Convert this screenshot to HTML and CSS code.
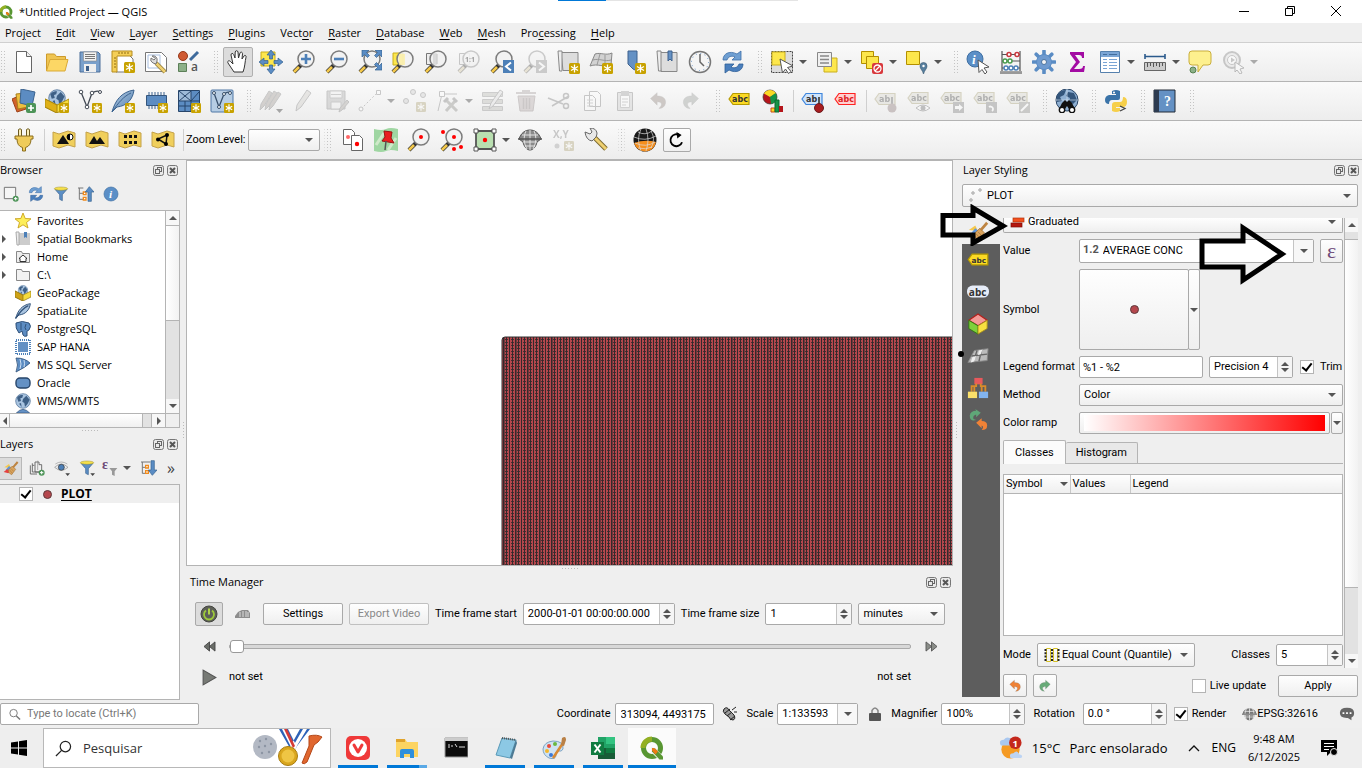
FILE: index.html
```html
<!DOCTYPE html>
<html lang="en">
<head>
<meta charset="utf-8">
<title>*Untitled Project — QGIS</title>
<link rel="stylesheet" href="styles.css">
</head>
<body>
<svg class="defs" aria-hidden="true">
  <defs>
    <linearGradient id="gsky" x1="0" y1="0" x2="1" y2="1"><stop offset="0" stop-color="#b9cfe6"/><stop offset="1" stop-color="#4d7cae"/></linearGradient>
    <symbol id="star" viewBox="0 0 11 11"><rect width="11" height="11" rx="1.500" fill="#c8a200"/><path d="M5.500 1.500v8M2 3.500l7 4M9 3.500l-7 4" stroke="#fff" stroke-width="1.300"/></symbol>
    <symbol id="mag" viewBox="0 0 24 24"><path d="M2 22l7-7" stroke="#333" stroke-width="4"/><path d="M2 22l5-5" stroke="#f4c84a" stroke-width="2.600"/><circle cx="14" cy="9" r="8" fill="#f1f1f1" fill-opacity=".85" stroke="#7c7c7c" stroke-width="1.500"/></symbol>
    <symbol id="tag" viewBox="0 0 22 14"><path d="M1 7l4-5.500h16v11H5z" fill="currentColor" stroke="var(--line,#b59a00)" stroke-width="1.200"/></symbol>
    <symbol id="earth" viewBox="0 0 24 24"><circle cx="12" cy="12" r="11" fill="#a9c4e0" stroke="#476a91"/><path d="M3 7c3-4 6-4 9-4l-1 4-3 1 1 4-4 1zM12 9l5-5 5 6-3 6-4 5-1-6-3-2zM6 16l3-1 1 6z" fill="#3e6086"/></symbol>
    <symbol id="refresh" viewBox="0 0 24 24"><path d="M2 10C2 4 8 0 16 4l4-3v9h-9l3-3C10 5 7 7 6 10z" fill="#6f9fd2" stroke="#3d6fa8" stroke-width=".8"/><path d="M22 14c0 6-6 10-14 6l-4 3v-9h9l-3 3c4 2 7 0 8-3z" fill="#4a7fbd" stroke="#2f5f98" stroke-width=".8"/></symbol>
    <symbol id="float" viewBox="0 0 11 11"><rect x=".5" y=".5" width="10" height="10" rx="2" fill="#e9e9e9" stroke="#777"/><rect x="4.500" y="2.500" width="4" height="4" fill="none" stroke="#666"/><rect x="2.500" y="4.500" width="4" height="4" fill="#e9e9e9" stroke="#666"/></symbol>
    <symbol id="close" viewBox="0 0 11 11"><rect x=".5" y=".5" width="10" height="10" rx="2" fill="#e9e9e9" stroke="#777"/><path d="M3 3l5 5M8 3l-5 5" stroke="#555" stroke-width="2"/></symbol>
    <symbol id="ground" viewBox="0 0 24 24"><path d="M1 4l6 2 9-3 7 2v14l-7-2-9 3-6-2z" fill="#f0cf5c" stroke="#c4a24a"/></symbol>
    <symbol id="undo" viewBox="0 0 24 24"><path d="M3 9l8-7v4c7 0 11 3 10 9-1 4-4 6-8 6 5-4 4-8-2-8v4z" fill="currentColor" stroke="#666" stroke-opacity=".4"/></symbol>
    <symbol id="funnel" viewBox="0 0 24 24"><path d="M3 5h18l-7 8v9l-4-2v-7z" fill="#5c8fc6" stroke="#38618f"/><ellipse cx="12" cy="4" rx="10" ry="2.500" fill="#f6e04a" stroke="#9c8b24" stroke-width=".7"/></symbol>
    <symbol id="brush" viewBox="0 0 24 24"><path d="M2 11l7-5 3 6z" fill="#f5c84c"/><path d="M4 15l5-6 5 4-3 3z" fill="#5b94dc"/><path d="M1 18l5-4 5 2-3 4z" fill="#e54040"/><path d="M8 15l6-6 5 5-6 8c-3-1-5-4-5-7z" fill="#d9a35d" stroke="#9d6c30" stroke-width=".8"/><path d="M15 11l7-8" stroke="#bd8340" stroke-width="3"/><path d="M10 15l4 5M12 13l4 4" stroke="#9d6c30" stroke-width=".7"/></symbol>
    <symbol id="qlogo" viewBox="0 0 24 24"><circle cx="12" cy="12" r="8.500" fill="none" stroke="#589632" stroke-width="5"/><path d="M3 12a9 9 0 0 1 9-9" fill="none" stroke="#93b023" stroke-width="5"/><path d="M11 11l4 1 8 8v4h-4l-8-8z" fill="#f0f0f0"/><path d="M12 12l3 .5 8 8v3h-3.500l-7.500-8z" fill="#589632"/><path d="M12 12l3 .5 3 3-2.500 3-3.500-4z" fill="#ee7913"/></symbol>
    <symbol id="meridian" viewBox="0 0 24 24"><path d="M1 11a11 9 0 0 1 22 0zM4 13h16c0 5-4 8-8 8s-8-3-8-8z" fill="#777"/><path d="M1 11.500h22M4 7h16M5 16h14M12 2v19M7 3c-3 6-3 12 0 17M17 3c3 6 3 12 0 17" fill="none" stroke="#efefef" stroke-width="1.200"/><path d="M0 11.500h24" stroke="#555" stroke-width="1.500"/></symbol>
    <pattern id="dots" width="24" height="12" patternUnits="userSpaceOnUse">
      <rect width="24" height="12" fill="#b5474d"/>
      <path d="M1.500 0v12M4.500 0v12M7.500 0v12M10.500 0v12M13.500 0v12M16.500 0v12M19.500 0v12M22.500 0v12" stroke="#35292b"/>
      <path d="M0 1.500h24M0 4.500h24M0 7.500h24M0 10.500h24" stroke="#35292b" stroke-width="1" stroke-dasharray="1 1" stroke-opacity=".85"/>
      <path d="M5.500 0v12M17.500 0v12" stroke="#35292b" stroke-opacity=".55"/>
    </pattern>
  </defs>
</svg>

<header class="titlebar">
  <svg class="logo" viewBox="0 0 24 24"><use href="#qlogo"/></svg>
  <h1>*Untitled Project — QGIS</h1>
  <div class="progress"><span></span></div>
  <div class="winbtns">
    <button aria-label="Minimize"><svg viewBox="0 0 12 12"><path d="M1 6.500h10" stroke="#000"/></svg></button>
    <button aria-label="Restore"><svg viewBox="0 0 12 12"><path d="M1.500 3.500h7v7h-7zM3.500 3V1.500h7v7H9" fill="none" stroke="#000"/></svg></button>
    <button aria-label="Close"><svg viewBox="0 0 12 12"><path d="M1 1l10 10M11 1L1 11" stroke="#000"/></svg></button>
  </div>
</header>

<nav class="menubar">
  <button>Pro<u>j</u>ect</button><button><u>E</u>dit</button><button><u>V</u>iew</button><button><u>L</u>ayer</button><button><u>S</u>ettings</button><button><u>P</u>lugins</button><button>Vect<u>o</u>r</button><button><u>R</u>aster</button><button><u>D</u>atabase</button><button><u>W</u>eb</button><button><u>M</u>esh</button><button>Pro<u>c</u>essing</button><button><u>H</u>elp</button>
</nav>

<div class="toolbar" role="toolbar" aria-label="Project and navigation">
  <i class="handle"></i>
  <button class="tb" aria-label="New project"><svg viewBox="0 0 24 24"><path d="M4.500 1.500h10l5 5v16h-15z" fill="#fff" stroke="#666"/><path d="M14.500 1.500v5h5" fill="#eee" stroke="#666"/></svg></button>
  <button class="tb" aria-label="Open project"><svg viewBox="0 0 24 24"><path d="M1.500 21V4h8l2 2.500h9V10" fill="#efc451" stroke="#cc9a2c"/><path d="M1.500 21L5 9.500h18L20 21z" fill="#fcd765" stroke="#d9a937"/></svg></button>
  <button class="tb" aria-label="Save project"><svg viewBox="0 0 24 24"><path d="M2 2h18l2 2v18H2z" fill="#7aa0cb" stroke="#4d6f99"/><path d="M5.500 2h13v9h-13z" fill="#f2f2f2" stroke="#888" stroke-width=".6"/><path d="M7 4.500h10M7 6.500h10M7 8.500h10" stroke="#777"/><path d="M6 14h12v8H6z" fill="#efefef"/><path d="M8 16h3v5H8z" fill="#3d5f8a"/></svg></button>
  <button class="tb" aria-label="New print layout"><svg viewBox="0 0 24 24"><path d="M5 4h12l5 5v13H5z" fill="#fff" stroke="#777"/><path d="M1 1h20v5H6v16H1z" fill="#f5cf57" stroke="#b58c1e"/><path d="M3 8h2M3 11h2M3 14h2M3 17h2M8 2v2M11 2v2M14 2v2M17 2v2" stroke="#8f6c12"/><use href="#star" x="13" y="12" width="11" height="11"/></svg></button>
  <button class="tb" aria-label="Layout manager"><svg viewBox="0 0 24 24"><path d="M1.500 2.500h16l5 5v14h-21z" fill="#fff" stroke="#777"/><path d="M4 5h12v13H4z" fill="none" stroke="#a9bfe0"/><path d="M12 13l9 9" stroke="#8f7a3c" stroke-width="4"/><path d="M12 13l9 9" stroke="#efd070" stroke-width="2.500"/><path d="M8 6a4 4 0 0 1 5 5 l-1 3-3-1a4 4 0 0 1-2-5l3 2 1.500-1.500z" fill="#ddd" stroke="#777"/></svg></button>
  <button class="tb" aria-label="Style manager"><svg viewBox="0 0 24 24"><circle cx="6" cy="6" r="4.500" fill="#cf5a32" stroke="#95391a"/><path d="M13 10l8-8" stroke="#3e6a9c" stroke-width="3"/><path d="M1.500 13.500h8v8h-8z" fill="#8cb088" stroke="#5c7f58"/><text x="14" y="21" class="ico-a">a</text></svg></button>
  <i class="handle"></i>
  <button class="tb on" aria-label="Pan map"><svg viewBox="0 0 24 24"><path d="M8 22c-2-3-4-6-6-9-1-2 1-3 2.500-1.500L7 14 5 5c0-2 2-2 2.700-.5L9 8l.2-6c.3-1.700 2.500-1.700 2.800 0L12.500 8l1.500-5c.5-1.500 2.500-1 2.500.7L16 9l2-3c1-1.300 2.500-.3 2 1.200C19 11 19 17 17 22z" fill="#fff" stroke="#333"/></svg></button>
  <button class="tb" aria-label="Pan to selection"><svg viewBox="0 0 24 24"><path d="M2 2h14v14H2z" fill="#fde74c" stroke="#c9ae1c"/><path d="M12 0l4 5h-2.500v4h-3V5H8zM12 24l4-5h-2.500v-4h-3v4H8zM0 12l5-4v2.500h4v3H5V16zM24 12l-5-4v2.500h-4v3h4V16z" fill="#5a8cc4" stroke="#34618f" stroke-width=".7"/></svg></button>
  <button class="tb" aria-label="Zoom in"><svg viewBox="0 0 24 24"><use href="#mag"/><path d="M14 4v10M9 9h10" stroke="#4d80b8" stroke-width="2.600"/></svg></button>
  <button class="tb" aria-label="Zoom out"><svg viewBox="0 0 24 24"><use href="#mag"/><path d="M9 9h10" stroke="#4d80b8" stroke-width="2.600"/></svg></button>
  <button class="tb" aria-label="Zoom full"><svg viewBox="0 0 24 24"><use href="#mag"/><path d="M4 0h7L8.500 2.500l3 3-2 2-3-3L4 7zM24 0v7l-2.500-2.500-3 3-2-2 3-3L17 0zM24 20h-7l2.500-2.500-3-3 2-2 3 3L24 13z" fill="#5a8cc4" stroke="#34618f" stroke-width=".7"/></svg></button>
  <button class="tb" aria-label="Zoom to selection"><svg viewBox="0 0 24 24"><path d="M2 3h10v12H2z" fill="#fde74c" stroke="#c9ae1c"/><use href="#mag"/><path d="M8 4h6v11H8z" fill="#fdf09c" opacity=".7"/></svg></button>
  <button class="tb" aria-label="Zoom to layer"><svg viewBox="0 0 24 24"><path d="M2.500 3.500h10v11h-10z" fill="#eee" stroke="#777"/><use href="#mag"/><path d="M9 4h5v10H9z" fill="#ccc" opacity=".6"/></svg></button>
  <button class="tb off" aria-label="Zoom native"><svg viewBox="0 0 24 24"><path d="M2.500 3.500h10v11h-10z" fill="#eee" stroke="#777"/><use href="#mag"/><text x="8" y="12" class="ico-s">1:1</text></svg></button>
  <button class="tb" aria-label="Zoom last"><svg viewBox="0 0 24 24"><use href="#mag"/><path d="M13 10h11v13H13z" fill="#4d80b8"/><path d="M21 12.500l-5 4 5 4" fill="none" stroke="#fff" stroke-width="2"/></svg></button>
  <button class="tb off" aria-label="Zoom next"><svg viewBox="0 0 24 24"><use href="#mag"/><path d="M13 10h11v13H13z" fill="#888"/><path d="M16 12.500l5 4-5 4" fill="none" stroke="#fff" stroke-width="2"/></svg></button>
  <button class="tb" aria-label="New map view"><svg viewBox="0 0 24 24"><path d="M5 2.500h17v18H7z" fill="#ddd" stroke="#888"/><path d="M2 1h4v20H3.500z" fill="#eee" stroke="#888"/><use href="#star" x="13" y="13" width="11" height="11"/></svg></button>
  <button class="tb" aria-label="New 3D map view"><svg viewBox="0 0 24 24"><path d="M6 4c6-2 10 2 17-1l-1 12c-7 3-13-2-21 1z" fill="#d2d2d2" stroke="#888"/><path d="M4 10c6-2 12 2 18 0M11 4L8 15M16 5v11" fill="none" stroke="#999"/><use href="#star" x="13" y="13" width="11" height="11"/></svg></button>
  <button class="tb" aria-label="New spatial bookmark"><svg viewBox="0 0 24 24"><path d="M6 1h9v20l-4-2-5-5z" fill="#6491c4" stroke="#3d618d"/><use href="#star" x="13" y="13" width="11" height="11"/></svg></button>
  <button class="tb" aria-label="Show spatial bookmarks"><svg viewBox="0 0 24 24"><path d="M4 2.500h18v19H6z" fill="#ddd" stroke="#888"/><path d="M2 1h4v20H3.500z" fill="#eee" stroke="#888"/><path d="M13 1h4v10l-2-2-2 2z" fill="#6491c4" stroke="#3d618d"/></svg></button>
  <button class="tb" aria-label="Temporal controller"><svg viewBox="0 0 24 24"><circle cx="12" cy="12" r="10.500" fill="#f5f5f5" stroke="#777" stroke-width="1.500"/><path d="M12 4v8l4 4" fill="none" stroke="#666" stroke-width="1.500"/><circle cx="12" cy="12" r="8.500" fill="none" stroke="#6491c4" stroke-dasharray="1 3.450"/></svg></button>
  <button class="tb" aria-label="Refresh"><svg viewBox="0 0 24 24"><use href="#refresh"/></svg></button>
  <i class="handle"></i>
  <button class="tb drop" aria-label="Select features"><svg viewBox="0 0 24 24"><path d="M1.500 1.500h21v21h-21z" fill="#ddd" stroke="#444" stroke-dasharray="2 1"/><path d="M2 2h13v13H2z" fill="#fde74c" stroke="#c9ae1c"/><path d="M10 9l13 7-5.500 1.500 3.500 4-2.500 2-3-4.500-3 4z" fill="#fff" stroke="#555"/></svg></button>
  <button class="tb drop" aria-label="Select by value"><svg viewBox="0 0 24 24"><path d="M9 8h13v14H9z" fill="#fde74c" stroke="#c9ae1c"/><path d="M2.500 2.500h14v14h-14z" fill="#f0f0f0" stroke="#888"/><path d="M5 6h9M5 9.500h9M5 13h9" stroke="#888" stroke-width="1.500"/></svg></button>
  <button class="tb drop" aria-label="Deselect features"><svg viewBox="0 0 24 24"><path d="M1.500 1.500h12v12h-12z" fill="#fde74c" stroke="#b38f00"/><path d="M6.500 6.500h12v12h-12z" fill="#fde74c" stroke="#b38f00"/><rect x="12" y="13" width="11" height="11" rx="2" fill="#d8373c"/><circle cx="17.500" cy="18.500" r="3.500" fill="none" stroke="#fff" stroke-width="1.300"/><path d="M15 21l5-5" stroke="#fff" stroke-width="1.300"/></svg></button>
  <button class="tb drop" aria-label="Select by location"><svg viewBox="0 0 24 24"><path d="M1.500 1.500h13v13h-13z" fill="#fde74c" stroke="#b38f00"/><path d="M18.500 24c-1-4-3.500-5-3.500-8a3.500 3.500 0 0 1 7 0c0 3-2.500 4-3.500 8z" fill="#587f9e" stroke="#38566e" stroke-width=".6"/><circle cx="18.500" cy="16" r="1.200" fill="#fff"/></svg></button>
  <i class="handle"></i>
  <button class="tb" aria-label="Identify features"><svg viewBox="0 0 24 24"><circle cx="9" cy="9" r="8" fill="#5b8fc7" stroke="#3f6fa2"/><text x="6" y="14" class="ico-i">i</text><path d="M12 10l11 7-5 1 3 4-2 2-3-4.500-3 3z" fill="#fff" stroke="#555"/></svg></button>
  <button class="tb" aria-label="Field calculator"><svg viewBox="0 0 24 24"><path d="M3 1v20M21 1v20M3 4.500h18M3 11h18M3 18h18" stroke="#555" stroke-width="1.200"/><path d="M1 23h22" stroke="#555" stroke-width="3"/><path d="M1 23h22" stroke="#ddd"/><g fill="#fff" stroke-width="1.500"><g stroke="#c8373c"><circle cx="10" cy="4.500" r="2"/><circle cx="18" cy="4.500" r="2"/></g><g stroke="#4a9c4e"><circle cx="6" cy="11" r="2"/><circle cx="11" cy="11" r="2"/></g><g stroke="#4d80b8"><circle cx="7" cy="18" r="2"/><circle cx="12" cy="18" r="2"/><circle cx="17" cy="18" r="2"/></g></g></svg></button>
  <button class="tb" aria-label="Processing toolbox"><svg viewBox="0 0 24 24"><path d="M12 1v22M1 12h22M4.200 4.200l15.600 15.600M19.800 4.200L4.200 19.800" stroke="#5a8cc4" stroke-width="3.600" stroke-linecap="round"/><circle cx="12" cy="12" r="7.500" fill="#6f9bd0" stroke="#5a8cc4"/><circle cx="12" cy="12" r="2.500" fill="#f5f5f5" stroke="#34618f" stroke-width=".8"/></svg></button>
  <button class="tb" aria-label="Statistical summary"><svg viewBox="0 0 24 24"><path d="M5 2h14v6h-2c0-2-1-3-3-3H10l5 7-6 7h5c3 0 4-1 4-3h2l-1 6H5v-2l6-8-6-8z" fill="#a30ba3"/></svg></button>
  <button class="tb drop" aria-label="Attribute table"><svg viewBox="0 0 24 24"><path d="M2.500 1.500h19v21h-19z" fill="#fff" stroke="#5580ad"/><path d="M3 2h18v5H3z" fill="#7aa5d5"/><path d="M5 4.500h4M11 4.500h8" stroke="#426d9c"/><path d="M5 9.500h4M11 9.500h8M5 12.500h4M11 12.500h8M5 15.500h4M11 15.500h8M5 18.500h4M11 18.500h8" stroke="#7aa5d5"/></svg></button>
  <button class="tb drop" aria-label="Measure"><svg viewBox="0 0 24 24"><path d="M2 6.500h20M2 4v5M22 4v5" stroke="#2b5a8c" stroke-width="1.600"/><path d="M1.500 12.500h21v8h-21z" fill="#ccc" stroke="#666"/><path d="M4.500 13v4M7.500 13v3M10.500 13v4M13.500 13v3M16.500 13v4M19.500 13v3" stroke="#555"/></svg></button>
  <button class="tb" aria-label="Map tips"><svg viewBox="0 0 24 24"><path d="M4 1h16q3 0 3 3v8q0 3-3 3h-5l-5 7v-7H4q-3 0-3-3V4q0-3 3-3z" fill="#fdf08e" stroke="#c9ae3c"/><circle cx="5" cy="20" r="3" fill="#8cb088" stroke="#55814f"/></svg></button>
  <button class="tb drop off" aria-label="Run feature action"><svg viewBox="0 0 24 24"><circle cx="11" cy="10" r="8" fill="#ddd" stroke="#777" stroke-width="2"/><circle cx="11" cy="10" r="4.500" fill="#fff" stroke="#777"/><path d="M10 7.500v5l4-2.500z" fill="#777"/><path d="M14 12l9 6-4 1 2 4-2 1-3-4-2 2z" fill="#fff" stroke="#555"/></svg></button>
</div>

<div class="toolbar" role="toolbar" aria-label="Layers and editing">
  <i class="handle"></i>
  <button class="tb" aria-label="Data source manager"><svg viewBox="0 0 24 24"><path d="M0 10l9-4 5 14-9 3z" fill="#d2622a" stroke="#9c431a"/><path d="M4 5l10-1 2 14-10 2z" fill="#eebf3e" stroke="#a8801c"/><path d="M9 0l14 3-3 14L8 14z" fill="#5c8cc2" stroke="#3c638f"/><rect x="14" y="14" width="10" height="10" rx="2" fill="#4d9458"/><path d="M19 16v6M16 19h6" stroke="#fff" stroke-width="1.700"/></svg></button>
  <button class="tb" aria-label="New GeoPackage layer"><svg viewBox="0 0 24 24"><use href="#earth" x="3" width="18" height="18"/><path d="M0 10l12 6 12-6v7l-12 7-12-6z" fill="#f6dc3c" stroke="#a88812"/><path d="M0 10l12 6v8L0 18z" fill="#dfb016" stroke="#a88812"/><use href="#star" x="14" y="14" width="10" height="10"/></svg></button>
  <button class="tb" aria-label="New shapefile layer"><svg viewBox="0 0 24 24"><path d="M3 3l6 15 5-14q5-3 8-1" fill="none" stroke="#444b55" stroke-width="1.300"/><g fill="#fff" stroke="#444b55"><circle cx="3" cy="3" r="1.800"/><circle cx="9" cy="18" r="1.800"/><circle cx="14" cy="4" r="1.800"/><circle cx="22" cy="3" r="1.500"/></g><use href="#star" x="14" y="14" width="10" height="10"/></svg></button>
  <button class="tb" aria-label="New SpatiaLite layer"><svg viewBox="0 0 24 24"><path d="M1 23C4 12 10 3 23 1c-1 9-7 16-17 17z" fill="url(#gsky)" stroke="#3c638f"/><path d="M1 23C7 14 13 7 20 4" fill="none" stroke="#3c638f"/><use href="#star" x="14" y="14" width="10" height="10"/></svg></button>
  <button class="tb" aria-label="New temporary scratch layer"><svg viewBox="0 0 24 24"><path d="M5 3v17M8 3v17M11 3v17M14 3v17M17 3v17M20 3v17" stroke="#3c638f"/><path d="M2.500 6.500h20v10h-20z" fill="#5c8cc2" stroke="#34557c"/><use href="#star" x="14" y="14" width="10" height="10"/></svg></button>
  <button class="tb" aria-label="New mesh layer"><svg viewBox="0 0 24 24"><path d="M1.500 1.500h21v21h-21z" fill="#5c8cc2" stroke="#27456a"/><path d="M2 2h12v10H2z" fill="#9dbad8"/><path d="M14 2v20M2 12h20M2 2l12 10L22 3M2 12L14 2M8 12v10M2 17h12" fill="none" stroke="#27456a"/><use href="#star" x="14" y="14" width="10" height="10"/></svg></button>
  <button class="tb" aria-label="New virtual layer"><svg viewBox="0 0 24 24"><rect x="1" y="1" width="22" height="22" rx="1" fill="#b6cde4" stroke="#4e77a5"/><path d="M4 4l5 14 5-13q4-3 6-1" fill="none" stroke="#38506c" stroke-width="1.300"/><g fill="#fff" stroke="#38506c"><circle cx="4" cy="4" r="1.500"/><circle cx="9" cy="18" r="1.500"/><circle cx="14" cy="5" r="1.500"/><circle cx="20" cy="4" r="1.500"/></g><use href="#star" x="14" y="14" width="10" height="10"/></svg></button>
  <i class="handle"></i>
  <button class="tb off" aria-label="Current edits"><svg viewBox="0 0 24 24"><g fill="#a8927e" stroke="#777"><path d="M1 21l1-6L10 2l3 2-8 13z"/><path d="M6 21l1-6L15 2l3 2-8 13z"/><path d="M10 21l1-6L19 3l3 2-8 12z"/></g><path d="M17 20h7l-3.500 4z" fill="#222"/></svg></button>
  <button class="tb off" aria-label="Toggle editing"><svg viewBox="0 0 24 24"><path d="M4 22l1-6L15 1l4 3L9 18z" fill="#cfc8b8" stroke="#777"/></svg></button>
  <button class="tb off" aria-label="Save edits"><svg viewBox="0 0 24 24"><path d="M2 2h18v18H2z" fill="#aaa" stroke="#777"/><path d="M5 2h12v7H5zM6 13h10v7H6z" fill="#eee" stroke="#888"/><path d="M6 5.500h10" stroke="#888"/><path d="M14 23l1-4 7-8 2 2-7 8z" fill="#a98" stroke="#777"/></svg></button>
  <button class="tb drop off" aria-label="Digitize"><svg viewBox="0 0 24 24"><path d="M3 20L20 3" stroke="#777" stroke-dasharray="2 2"/><circle cx="3" cy="20" r="2" fill="#fff" stroke="#777"/><path d="M18.500 1.500h4v4h-4z" fill="#fff" stroke="#777"/></svg></button>
  <button class="tb off" aria-label="Add point"><svg viewBox="0 0 24 24"><g fill="#ccc" stroke="#777"><circle cx="3" cy="12" r="2.500"/><circle cx="10" cy="3" r="2.500"/><circle cx="20" cy="6" r="2.500"/></g><use href="#star" x="13" y="13" width="10" height="10"/></svg></button>
  <button class="tb drop off" aria-label="Vertex tool"><svg viewBox="0 0 24 24"><path d="M2 22L6 5h15" fill="none" stroke="#777"/><path d="M3.500 2.500h5v5h-5z" fill="#fff" stroke="#777"/><path d="M10 22L20 11M10 11l11 11" stroke="#887" stroke-width="3"/><path d="M8 13l4-4M17 9l4 4" stroke="#777" stroke-width="3"/></svg></button>
  <button class="tb off" aria-label="Modify attributes"><svg viewBox="0 0 24 24"><path d="M1.500 3.500h20v4h-20zM1.500 10.500h20v4h-20zM1.500 17.500h20v4h-20z" fill="#b5b89f" stroke="#888"/><path d="M8 20l2-6L19 1l3 2-10 14z" fill="#ddd" stroke="#777"/></svg></button>
  <button class="tb off" aria-label="Delete selected"><svg viewBox="0 0 24 24"><path d="M4 7h17l-2 15H6z" fill="#c8a0a0" stroke="#977"/><path d="M2 4h20M8 2h8M9.500 9v11M12.500 9v11M15.500 9v11" stroke="#977" stroke-width="1.500"/></svg></button>
  <button class="tb off" aria-label="Cut"><svg viewBox="0 0 24 24"><path d="M1 9l15 6M5 17L22 7" stroke="#777" stroke-width="1.600"/><circle cx="19" cy="7" r="2.500" fill="none" stroke="#777" stroke-width="1.500"/><circle cx="19" cy="17" r="2.500" fill="none" stroke="#777" stroke-width="1.500"/></svg></button>
  <button class="tb off" aria-label="Copy"><svg viewBox="0 0 24 24"><path d="M9.500 2.500h8l3 3v12h-11zM4.500 6.500h8l3 3v12h-11z" fill="#fff" stroke="#777"/><path d="M7 11h6M7 14h6M7 17h6" stroke="#999"/></svg></button>
  <button class="tb off" aria-label="Paste"><svg viewBox="0 0 24 24"><path d="M4.500 3.500h15v18h-15z" fill="#ccc" stroke="#777"/><path d="M7.500 6.500h9v12h-9z" fill="#fff" stroke="#999"/><path d="M8 2h8v4H8z" fill="#999"/><path d="M9 10h6M9 13h6M9 16h4" stroke="#999"/></svg></button>
  <button class="tb off" aria-label="Undo"><svg viewBox="0 0 24 24" color="#a87860"><use href="#undo" width="20" height="20" x="2" y="2"/></svg></button>
  <button class="tb off" aria-label="Redo"><svg viewBox="0 0 24 24" color="#8a9a8a"><g transform="translate(24 0) scale(-1 1)"><use href="#undo" width="20" height="20" x="2" y="2"/></g></svg></button>
  <i class="handle"></i>
  <button class="tb" aria-label="Layer labeling"><svg viewBox="0 0 24 24" color="#fbd924"><use href="#tag" x="0" y="3" width="22" height="14"/><text x="4" y="13" class="ico-t">abc</text></svg></button>
  <button class="tb" aria-label="Layer diagram"><svg viewBox="0 0 24 24"><circle cx="9" cy="8" r="7" fill="#b5151b" stroke="#333" stroke-width=".7"/><path d="M9 8L3 4.500a7 7 0 0 1 12 0z" fill="#fbd924"/><path d="M9 8l5.500-4A7 7 0 0 1 10 15z" fill="#169447"/><path d="M10 19h4v4h-4z" fill="#fbd924" stroke="#c94a12"/><path d="M14 11h4v12h-4z" fill="#169447" stroke="#0a6a2e"/><path d="M18 17h4v6h-4z" fill="#b5151b"/></svg></button>
  <i class="sep"></i>
  <button class="tb" aria-label="Highlight pinned labels"><svg viewBox="0 0 24 24" color="#cfe4fb" class="blue"><use href="#tag" x="0" y="3" width="22" height="14"/><text x="5" y="13" class="ico-t">ab</text><path d="M18 8v8" stroke="#555" stroke-width="2"/><circle cx="18" cy="19" r="4.500" fill="#a81c20" stroke="#6b1a1c"/></svg></button>
  <button class="tb" aria-label="Toggle unplaced labels"><svg viewBox="0 0 24 24" color="#ffd0d0" class="red"><use href="#tag" x="0" y="3" width="22" height="14"/><text x="4" y="13" class="ico-t">abc</text></svg></button>
  <i class="sep"></i>
  <button class="tb off" aria-label="Pin labels"><svg viewBox="0 0 24 24" color="#d8d4b0"><use href="#tag" x="0" y="3" width="22" height="14"/><text x="5" y="13" class="ico-t">ab</text><path d="M18 8v8" stroke="#555" stroke-width="2"/><circle cx="18" cy="19" r="4.500" fill="#a66"/></svg></button>
  <button class="tb off" aria-label="Show or hide labels"><svg viewBox="0 0 24 24" color="#d8d4b0"><use href="#tag" x="0" y="2" width="22" height="14"/><text x="4" y="12" class="ico-t">abc</text><path d="M9 19q7-6 14 0q-7 6-14 0z" fill="#fff" stroke="#666"/><circle cx="16" cy="19" r="2.500" fill="#666"/></svg></button>
  <button class="tb off" aria-label="Move label"><svg viewBox="0 0 24 24" color="#d8d4b0"><use href="#tag" x="0" y="2" width="22" height="14"/><text x="4" y="12" class="ico-t">abc</text><path d="M13 13h11v11H13z" fill="#777"/><path d="M15 17h4v-2l4 3.500-4 3.500v-2h-4z" fill="#fff"/></svg></button>
  <button class="tb off" aria-label="Rotate label"><svg viewBox="0 0 24 24" color="#d8d4b0"><use href="#tag" x="0" y="2" width="22" height="14"/><text x="4" y="12" class="ico-t">abc</text><path d="M13 13h11v11H13z" fill="#777"/><path d="M16 18a2.500 2.500 0 1 1 3 4" fill="none" stroke="#fff" stroke-width="1.800"/></svg></button>
  <button class="tb off" aria-label="Change label"><svg viewBox="0 0 24 24" color="#d8d4b0"><use href="#tag" x="0" y="2" width="22" height="14"/><text x="4" y="12" class="ico-t">abc</text><path d="M13 13h11v11H13z" fill="#887"/><path d="M15 22l7-7" stroke="#fff" stroke-width="2"/></svg></button>
  <i class="handle"></i>
  <button class="tb" aria-label="MetaSearch"><svg viewBox="0 0 24 24"><circle cx="12" cy="11" r="11" fill="#8fb0d3" stroke="#2b4666"/><path d="M2 6q4-5 9-5l-2 5-4 2 2 4-5 1zM13 3l6 1 3 7-4 4-4-2 1-4-4-2z" fill="#34567c"/><path d="M1 11h22M12 0v14" stroke="#dce8f4" stroke-width=".6"/><path d="M7 14l3-3 2 2 2-2 3 3 3 6h-6l-2-3-2 3H4z" fill="#111"/><circle cx="7" cy="21" r="2.700" fill="#fff" stroke="#111" stroke-width="1.400"/><circle cx="17" cy="21" r="2.700" fill="#fff" stroke="#111" stroke-width="1.400"/></svg></button>
  <i class="handle"></i>
  <button class="tb" aria-label="Python console"><svg viewBox="0 0 24 24"><path d="M8 2q4-2 8 0v7q0 2-2 2H8q-3 0-3 4-4 0-4-4t4-5h7V5H8z" fill="#3a73a8"/><path d="M16 22q-4 2-8 0v-6q0-3 3-3h5q3 0 3-5 4 0 4 5t-4 5h-7v1h4z" fill="#f6cf4a"/><circle cx="10" cy="3.500" r="1" fill="#fff"/><path d="M16 17l5 2.500-5 2.500" fill="none" stroke="#444" stroke-width="1.300"/></svg></button>
  <i class="handle"></i>
  <button class="tb" aria-label="Help"><svg viewBox="0 0 24 24"><path d="M1 1h21v22H1z" fill="#6491c4" stroke="#222a36"/><path d="M1 1h5v22H1z" fill="#2d3b50"/><text x="11" y="17" class="ico-q">?</text></svg></button>
  <i class="handle"></i>
</div>

<div class="toolbar" role="toolbar" aria-label="Plugins">
  <i class="handle"></i>
  <button class="tb" aria-label="Connect"><svg viewBox="0 0 24 24"><path d="M6.500 8V1.500q1.500-1.500 3 0V8M14.500 8V1.500q1.500-1.500 3 0V8" fill="#fbeeb8" stroke="#6b5a22"/><path d="M3 8h18v3h-2q0 7-5.500 8.500V23h-3v-3.500Q5 18 5 11H3z" fill="#efcb5a" stroke="#8a6d1c"/></svg></button>
  <i class="sep"></i>
  <button class="tb" aria-label="Hillshade"><svg viewBox="0 0 24 24"><use href="#ground"/><path d="M5 16l6-9 6 9z" fill="#111"/><circle cx="18" cy="9" r="3" fill="#fff" stroke="#111"/><path d="M18 6a3 3 0 0 0 0 6z"/></svg></button>
  <button class="tb" aria-label="Terrain"><svg viewBox="0 0 24 24"><use href="#ground"/><path d="M4 16l5-8 3 5 3-4 5 7z" fill="#111"/></svg></button>
  <button class="tb" aria-label="Raster tiles"><svg viewBox="0 0 24 24"><use href="#ground"/><path d="M6 7h3v3H6zM11 7h3v3h-3zM16 7h3v3h-3zM6 13h3v3H6zM11 13h3v3h-3zM16 13h3v3h-3z" fill="#111"/></svg></button>
  <button class="tb" aria-label="Vector tiles"><svg viewBox="0 0 24 24"><use href="#ground"/><path d="M16 7l-9 4 8 5z" fill="none" stroke="#111" stroke-width="1.500"/><circle cx="16" cy="7" r="2"/><circle cx="7" cy="11.500" r="2"/><circle cx="15" cy="16" r="2"/></svg></button>
  <i class="sep tight"></i>
  <label for="zoomlevel">Zoom Level:</label>
  <span class="combo zoomlevel"><select id="zoomlevel"><option></option></select></span>
  <i class="handle"></i>
  <button class="tb" aria-label="Copy coordinates"><svg viewBox="0 0 24 24"><path d="M2.500 1.500h8l3 3v12h-11z" fill="#fff" stroke="#666"/><circle cx="7" cy="9" r="2" fill="#f66"/><path d="M10.500 7.500h8l3 3v12h-11z" fill="#fff" stroke="#666"/><circle cx="16" cy="16" r="2.200" fill="#f00"/></svg></button>
  <button class="tb" aria-label="Map location"><svg viewBox="0 0 24 24"><path d="M0 1q8 2 12 0t12 0v22q-8-2-12 0t-12 0z" fill="#9fd6a2"/><path d="M2 17l8-12M14 22l8-12" stroke="#cfe9c9" stroke-width="3"/><path d="M10 3l8 1-1 6 3 5-12-2 3-4z" fill="#e81f1f" stroke="#9d1212"/><path d="M12 13l-1 9" stroke="#555" stroke-width="1.500"/></svg></button>
  <button class="tb" aria-label="Zoom to point"><svg viewBox="0 0 24 24"><use href="#mag"/><circle cx="14" cy="9" r="2" fill="#f00"/></svg></button>
  <button class="tb" aria-label="Multi location zoom"><svg viewBox="0 0 24 24"><use href="#mag"/><circle cx="14" cy="9" r="2" fill="#f00"/><circle cx="3" cy="4" r="2" fill="#f00"/><circle cx="14" cy="21" r="2" fill="#f00"/><circle cx="21" cy="19" r="2" fill="#f00"/></svg></button>
  <button class="tb drop" aria-label="Copy extents"><svg viewBox="0 0 24 24"><path d="M3 3h18v18H3z" fill="#b9dfb0" stroke="#555" stroke-width="1.800"/><path d="M1 1h4v4H1zM19 1h4v4h-4zM1 19h4v4H1zM19 19h4v4h-4z" fill="#fff" stroke="#555"/><circle cx="12" cy="12" r="2.200" fill="#f00"/></svg></button>
  <button class="tb" aria-label="External map"><svg viewBox="0 0 24 24"><path d="M1 11C3 5 7 2 12 2s9 3 11 9l-4 3c-1 5-4 8-7 8s-6-3-7-8z" fill="#8a8a8a" stroke="#555"/><path d="M4 7h16M5 14h14M7 18h10M12 2v20M8 3c-3 6-2 13 1 18M16 3c3 6 2 13-1 18" fill="none" stroke="#e4e4e4"/><path d="M0 11h24" stroke="#555" stroke-width="1.500"/></svg></button>
  <button class="tb off" aria-label="Coordinate capture"><svg viewBox="0 0 24 24"><text x="2" y="10" class="ico-xy">X,Y</text><circle cx="6" cy="18" r="2.500" fill="#999"/><use href="#star" x="13" y="13" width="10" height="10"/></svg></button>
  <button class="tb" aria-label="Plugin settings"><svg viewBox="0 0 24 24"><path d="M10 9l12 12" stroke="#7d6a30" stroke-width="5"/><path d="M11 10l11 11" stroke="#efd070" stroke-width="3"/><path d="M1 4l5 2 2-2-2-4q6 0 7 5 0 2-1 4l-4 4Q2 12 1 4z" fill="#e8e8e8" stroke="#666"/></svg></button>
  <i class="handle"></i>
  <button class="tb" aria-label="Globe builder"><svg viewBox="0 0 24 24"><circle cx="12" cy="12" r="11.500" fill="#181818"/><path d="M1 15q11-4 22-1-2 9-11 9.500Q4 23 1 15z" fill="#f58f1e"/><path d="M1 9q11 5 22-1M2 15q11 5 20-1M5 4q7 4 14-1M5 20q8 2 14-1M8 1q-5 10 0 22M13 1q4 11 0 22M18 3q5 8 0 17" fill="none" stroke="#ddd" stroke-width=".7"/></svg></button>
  <button class="push refresh" aria-label="Reload"><svg viewBox="0 0 20 20"><path d="M14 4a7 7 0 1 0 2.500 8" fill="none" stroke="#000" stroke-width="2.200"/><path d="M10 0l6 3.500-5 4z"/></svg></button>
</div>

<main class="work">
  <aside class="left">
    <section class="dock browser">
      <header class="docktitle"><h2>Browser</h2><button aria-label="Float"><svg><use href="#float"/></svg></button><button aria-label="Close"><svg><use href="#close"/></svg></button></header>
      <div class="dockbar">
        <button aria-label="Add selected layers"><svg viewBox="0 0 24 24"><path d="M2 2h17v17H2z" fill="#f5f5f5" stroke="#777" stroke-width="1.500"/><circle cx="19" cy="19" r="4.500" fill="#4d9458"/><path d="M19 16.500v5M16.500 19h5" stroke="#fff" stroke-width="1.500"/></svg></button>
        <button aria-label="Refresh"><svg viewBox="0 0 24 24"><use href="#refresh"/></svg></button>
        <button aria-label="Filter browser"><svg viewBox="0 0 24 24"><use href="#funnel"/></svg></button>
        <button aria-label="Collapse all"><svg viewBox="0 0 24 24"><path d="M2 3v17h6M2 11h6M0 3h8" stroke="#777" fill="none" stroke-width="1.500"/><path d="M8 9h4v4H8zM8 17h4v4H8z" fill="#fff" stroke="#f08a1c" stroke-width="2"/><path d="M17 1l7 8h-4v14h-5V9h-4z" fill="#5a8cc4" stroke="#34618f"/></svg></button>
        <button aria-label="Properties"><svg viewBox="0 0 24 24"><circle cx="12" cy="12" r="10.500" fill="#5b8fc7" stroke="#3f6fa2"/><text x="9" y="18" class="ico-i big">i</text></svg></button>
      </div>
      <div class="treebox">
        <ul class="tree">
          <li><svg viewBox="0 0 16 16"><path d="M8 0l2.200 5.500 5.800.3-4.500 3.700L13 15l-5-3.200L3 15l1.500-5.500L0 5.800l5.800-.3z" fill="#fdee5a" stroke="#c9a21c" stroke-width=".9"/></svg>Favorites</li>
          <li class="exp"><svg viewBox="0 0 16 16"><path d="M3 2h12v12H3z" fill="#ccc"/><path d="M1 1h3v13H2z" fill="#eee" stroke="#aaa"/><path d="M9 1h3v6l-1.500-1L9 7z" fill="#4d80b8"/></svg>Spatial Bookmarks</li>
          <li class="exp"><svg viewBox="0 0 16 16"><path d="M1.500 2.500h5l1 2h7v9h-13z" fill="#eee" stroke="#888"/><path d="M8 6l4 3.500h-1v3H5v-3H4z" fill="#fff" stroke="#333"/></svg>Home</li>
          <li class="exp"><svg viewBox="0 0 16 16"><path d="M1.500 2.500h5l1 2h7v9h-13z" fill="#f2f2f2" stroke="#888"/></svg>C:\</li>
          <li><svg viewBox="0 0 24 24"><use href="#earth" x="4" width="16" height="16"/><path d="M0 9l12 6 12-6v9l-12 6-12-6z" fill="#f6dc3c" stroke="#8a6f12"/><path d="M0 9l12 6v9L0 18z" fill="#cfa316" stroke="#8a6f12"/></svg>GeoPackage</li>
          <li><svg viewBox="0 0 24 24"><path d="M1 23C4 12 10 3 23 1c-1 9-7 16-17 17z" fill="#a9c4e0" stroke="#34557c" stroke-width="1.500"/><path d="M1 23C7 14 13 7 20 4" fill="none" stroke="#34557c" stroke-width="2"/></svg>SpatiaLite</li>
          <li><svg viewBox="0 0 16 16"><path d="M1 2q6-3 13 0 3 3 0 7l-2 1v5q-3 1-4-1l-1-4-3 2Q0 7 1 2z" fill="#5c8cc2" stroke="#2f5078"/><path d="M6 2v7M11 3q-2 4 0 6" fill="none" stroke="#2f5078"/></svg>PostgreSQL</li>
          <li><svg viewBox="0 0 16 16"><path d="M1 1h14v14H1z" fill="none" stroke="#4d80b8" stroke-width="2" stroke-dasharray="1 1"/><path d="M3 3h10v10H3z" fill="#6491c4"/></svg>SAP HANA</li>
          <li><svg viewBox="0 0 16 16"><path d="M1 1q9 0 14 5-4 4-14 9 3-7 0-14z" fill="#5c8cc2" stroke="#2f5078" stroke-width=".8"/><path d="M5 2q2 5 0 10M9 3q1 4 0 7" fill="none" stroke="#cfe0f2"/></svg>MS SQL Server</li>
          <li><svg viewBox="0 0 16 16"><rect x="1" y="3" width="14" height="10" rx="4" fill="#6491c4" stroke="#27456a" stroke-width="1.400"/></svg>Oracle</li>
          <li><svg viewBox="0 0 24 24"><use href="#earth"/></svg>WMS/WMTS</li>
          <li class="cut"><svg viewBox="0 0 24 6"><path d="M2 6q10-11 20 0z" fill="#6491c4" stroke="#2f5078"/></svg></li>
        </ul>
        <div class="vbar"><button class="ar up" aria-label="Scroll up"></button><i class="thumb"></i><i class="rest"></i><button class="ar down" aria-label="Scroll down"></button></div>
        <div class="hbar"><button class="ar lf" aria-label="Scroll left"></button><i class="thumb"></i><i class="rest"></i><button class="ar rt" aria-label="Scroll right"></button></div>
        <div class="corner"></div>
      </div>
    </section>
    <i class="grip-h"></i>
    <section class="dock layers">
      <header class="docktitle"><h2>Layers</h2><button aria-label="Float"><svg><use href="#float"/></svg></button><button aria-label="Close"><svg><use href="#close"/></svg></button></header>
      <div class="dockbar lay">
        <button class="on" aria-label="Open layer styling"><svg viewBox="0 0 24 24"><use href="#brush"/></svg></button>
        <button aria-label="Add group"><svg viewBox="0 0 24 24"><path d="M2 8v13h10M5 5v13M9 3h6M9 3v15h10V7h-4V3M5 8h3M5 18h10" fill="none" stroke="#666" stroke-width="1.400"/><path d="M13 1v14" stroke="#888"/><circle cx="19" cy="19" r="4.500" fill="#4d9458"/><path d="M19 16.500v5M16.500 19h5" stroke="#fff" stroke-width="1.500"/></svg></button>
        <button aria-label="Map themes"><svg viewBox="0 0 24 24"><path d="M1 11q10-10 20 0-10 9-20 0z" fill="#eee" stroke="#888"/><circle cx="11" cy="11" r="4.500" fill="#4d80b8" stroke="#333"/><path d="M2 6q9-6 18 0" fill="none" stroke="#999"/><path d="M17 20h7l-3.500 4z" fill="#444"/></svg></button>
        <button aria-label="Filter legend"><svg viewBox="0 0 24 24"><use href="#funnel"/><path d="M17 20h7l-3.500 4z" fill="#444"/></svg></button>
        <button class="wide" aria-label="Filter by expression"><svg viewBox="0 0 24 24"><text x="0" y="14" class="ico-e">ε</text><path d="M11 12h12l-4 5v7l-4-2v-5z" fill="#999"/></svg></button>
        <button aria-label="Expand all"><svg viewBox="0 0 24 24"><path d="M2 3v17h6M2 11h6M0 3h14" stroke="#777" fill="none" stroke-width="1.500"/><path d="M7 8h4v4H7zM7 16h4v4H7z" fill="#fff" stroke="#f08a1c" stroke-width="2"/><path d="M17 23l7-8h-4V1h-5v14h-4z" fill="#5a8cc4" stroke="#34618f"/></svg></button>
        <button class="more" aria-label="More">»</button>
      </div>
      <ul class="layertree"><li><input type="checkbox" id="plot" checked><i class="sym"></i><label for="plot">PLOT</label></li></ul>
    </section>
  </aside>

  <i class="grip-v"></i>

  <div class="center">
    <div class="map">
      <svg width="100%" height="100%"><rect x="315" y="176" width="100%" height="100%" rx="3" fill="url(#dots)" stroke="#333"/></svg>
    </div>
    <i class="grip-h"></i>
    <section class="dock time">
      <header class="docktitle"><h2>Time Manager</h2><button aria-label="Float"><svg><use href="#float"/></svg></button><button aria-label="Close"><svg><use href="#close"/></svg></button></header>
      <div class="trow controls">
        <button class="push power" aria-label="Toggle time manager"><svg viewBox="0 0 18 18"><circle cx="9" cy="9" r="8" fill="#5d5f58" stroke="#44463f"/><path d="M6 5.500a5 5 0 1 0 6 0" fill="none" stroke="#9dc93a" stroke-width="1.800"/><path d="M9 3.500v6" stroke="#b9e04a" stroke-width="1.800"/></svg></button>
        <button class="arch" aria-label="Archaeology mode"><svg viewBox="0 0 16 10"><path d="M0 9V7l3-4 4-2h6l2 3v5z" fill="#8d8d8d"/><path d="M5 3v5M8 2v6M11 2v6M13 3v5" stroke="#ddd"/></svg></button>
        <button class="push wide80">Settings</button>
        <button class="push wide80" disabled>Export Video</button>
        <label for="tstart">Time frame start</label>
        <span class="spin dt"><input id="tstart" value="2000-01-01 00:00:00.000"><span><button aria-label="Up"></button><button aria-label="Down"></button></span></span>
        <label for="tsize">Time frame size</label>
        <span class="spin ts"><input id="tsize" value="1"><span><button aria-label="Up"></button><button aria-label="Down"></button></span></span>
        <span class="combo grow"><select aria-label="Unit"><option>minutes</option></select></span>
      </div>
      <div class="trow sliderrow">
        <button class="media" aria-label="Back"><svg viewBox="0 0 14 12"><path d="M7 1v10L1 6zM13 1v10L7 6z" fill="#6a6d68" stroke="#444"/></svg></button>
        <input type="range" aria-label="Time" min="0" max="100" value="0">
        <button class="media" aria-label="Forward"><svg viewBox="0 0 14 12"><path d="M1 1v10l6-5zM7 1v10l6-5z" fill="#8a8d88" stroke="#555"/></svg></button>
      </div>
      <div class="trow playrow">
        <button class="media" aria-label="Play"><svg viewBox="0 0 14 16"><path d="M1 1v14l12-7z" fill="#777a75" stroke="#555"/></svg></button>
        <span>not set</span><span class="end">not set</span>
      </div>
    </section>
  </div>

  <i class="grip-v right"></i>

  <aside class="styling">
    <header class="docktitle"><h2>Layer Styling</h2><button aria-label="Float"><svg><use href="#float"/></svg></button><button aria-label="Close"><svg><use href="#close"/></svg></button></header>
    <span class="combo layer"><svg viewBox="0 0 16 16"><g fill="#fff" stroke="#999"><circle cx="4" cy="5" r="1.200"/><circle cx="11" cy="2" r="1.200"/><circle cx="2" cy="12" r="1.200"/></g></svg><select aria-label="Layer"><option>PLOT</option></select></span>
    <div class="stylebody">
      <nav class="strip">
        <button class="on" aria-label="Symbology"><svg viewBox="0 0 24 24"><use href="#brush"/></svg></button>
        <button aria-label="Labels"><svg viewBox="0 0 24 24" color="#fbd924"><use href="#tag" x="0" y="4" width="24" height="15"/><text x="5" y="15" class="ico-t">abc</text></svg></button>
        <button aria-label="Masks"><svg viewBox="0 0 24 24"><rect x="0" y="5" width="24" height="13" rx="6" fill="#e6ecf8"/><text x="2" y="16" class="ico-m">abc</text></svg></button>
        <button aria-label="3D view"><svg viewBox="0 0 24 24"><path d="M12 1l10 7-10 6L2 8z" fill="#f59a96" stroke="#b3201c" stroke-width="1.300"/><path d="M2 8l10 6v9L2 17z" fill="#7fd03a" stroke="#2f7a12"/><path d="M22 8l-10 6v9l10-6z" fill="#f8e040" stroke="#a8901c"/></svg></button>
        <button aria-label="Diagrams"><svg viewBox="0 0 24 24"><path d="M8 6l15-2-1 13-21 2z" fill="#bbb" stroke="#888"/><path d="M11 6L7 18M16 5l-3 13M5 12l17-2" stroke="#666" stroke-width="1.500"/><path d="M13 6l4-1-2 5-3 1zM6 13l4-1-2 6-4 1z" fill="#eee"/></svg></button>
        <button aria-label="Fields"><svg viewBox="0 0 24 24"><path d="M8 1h9v7H8z" fill="#e8595c"/><path d="M5 16v-6h5V7M20 16v-6h-5V7M8 10v6M16 10v6" fill="none" stroke="#d98c2a" stroke-width="2"/><path d="M1 16h10v7H1z" fill="#fbe06a"/><path d="M13 16h10v7H13z" fill="#82b4ef"/></svg></button>
        <button aria-label="History"><svg viewBox="0 0 24 24"><path d="M10 12Q3 14 3 7q1-5 7-5l-1-2 6 4-5 5V6Q6 7 7 11z" fill="#5fa778"/><path d="M10 15l6-5v3q6 0 6 5 0 5-6 5 3-4 0-5v3z" fill="#ef8236"/></svg></button>
      </nav>
      <div class="scroll">
        <div class="form">
          <span class="combo graduated"><svg viewBox="0 0 16 16"><rect x="3" y="4" width="11" height="4" fill="#f4511e" stroke="#b2330c" stroke-width=".7"/><rect x="1" y="9" width="11" height="4" fill="#b5170e" stroke="#7d0c06" stroke-width=".7"/></svg><select aria-label="Renderer"><option>Graduated</option></select></span>
          <div class="frow value"><label for="val">Value</label><span class="editcombo"><b>1.2</b><input id="val" value="AVERAGE CONC"><button aria-label="Choose field"><i class="tri"></i></button></span><button class="push eps" aria-label="Expression">ε</button></div>
          <div class="frow symbol"><span class="lab">Symbol</span><button class="push symbtn" aria-label="Change symbol"><i class="sym"></i></button><button class="push symdrop" aria-label="Symbol menu"><i class="tri"></i></button></div>
          <div class="frow"><label for="leg">Legend format</label><input class="field" id="leg" value="%1 - %2"><span class="spin prec"><input aria-label="Precision" value="Precision 4"><span><button aria-label="Up"></button><button aria-label="Down"></button></span></span><input type="checkbox" id="trim" checked><label class="auto" for="trim">Trim</label></div>
          <div class="frow"><label for="method">Method</label><span class="combo grow"><select id="method"><option>Color</option></select></span></div>
          <div class="frow"><span class="lab">Color ramp</span><button class="push ramp" aria-label="Edit color ramp"><i></i></button><button class="push rampdrop" aria-label="Ramp menu"><i class="tri"></i></button></div>
          <div class="tabs" role="tablist"><button role="tab" aria-selected="true">Classes</button><button role="tab" aria-selected="false">Histogram</button></div>
          <div class="classes"><table><thead><tr><th>Symbol<i class="tri"></i></th><th>Values</th><th>Legend</th></tr></thead><tbody></tbody></table></div>
          <div class="frow mode"><label class="auto" for="mode">Mode</label><span class="combo modec"><svg viewBox="0 0 16 16"><path d="M2.500 1.500h4v13h-4zM9.500 1.500h4v13h-4z" fill="none" stroke="#d8c226"/><path d="M1.500 2v12M8 2v12M14.500 2v12" stroke="#222" stroke-width="2" stroke-dasharray="2 1.300"/></svg><select id="mode"><option>Equal Count (Quantile)</option></select></span><label class="auto push-right" for="ncls">Classes</label><span class="spin ncls"><input id="ncls" value="5"><span><button aria-label="Up"></button><button aria-label="Down"></button></span></span></div>
        </div>
        <div class="vbar"><button class="ar up" aria-label="Scroll up"></button><i class="rest top"></i><i class="thumb"></i><i class="rest"></i><button class="ar down" aria-label="Scroll down"></button></div>
      </div>
      <footer class="actions">
        <button class="push sq" aria-label="Undo"><svg viewBox="0 0 24 24" color="#ef8236"><use href="#undo"/></svg></button>
        <button class="push sq" aria-label="Redo"><svg viewBox="0 0 24 24" color="#67ab78"><g transform="translate(24 0) scale(-1 1)"><use href="#undo"/></g></svg></button>
        <input type="checkbox" id="live"><label for="live">Live update</label>
        <button class="push wide80">Apply</button>
      </footer>
    </div>
  </aside>

  <svg class="note arrow-a" viewBox="0 0 68 42"><path d="M3 11.500h30V4l30 18-30 17v-8H3z" fill="none" stroke="#000" stroke-width="5"/></svg>
  <svg class="note arrow-b" viewBox="0 0 88 62"><path d="M3 18h41V5l39 26-39 26V44H3z" fill="none" stroke="#000" stroke-width="5"/></svg>
  <i class="note dot"></i>
</main>

<footer class="status">
  <span class="locate"><svg viewBox="0 0 14 14"><circle cx="6" cy="5.500" r="4" fill="none" stroke="#777"/><path d="M9 8.500l4 4" stroke="#777" stroke-width="1.500"/></svg><input aria-label="Locate" placeholder="Type to locate (Ctrl+K)"></span>
  <label class="push-right" for="coord">Coordinate</label><input class="field coord" id="coord" value="313094, 4493175">
  <button class="ic" aria-label="Toggle extents"><svg viewBox="0 0 16 16"><path d="M2 3q3-3 5 1l5 5q2 4-1 5-3 0-4-3L3 8Q0 5 2 3z" fill="#999" stroke="#222"/><path d="M3 7l5-4M5 10l5-4M10 4l4-3M12 6h3M8 14l5-4" stroke="#222"/></svg></button>
  <label for="scale">Scale</label><span class="editcombo scale"><input id="scale" value="1:133593"><button aria-label="Scales"><i class="tri"></i></button></span>
  <button class="ic lock" aria-label="Lock scale"><svg viewBox="0 0 14 16"><path d="M4 7V4.500q3-5 6 0V7" fill="none" stroke="#888" stroke-width="1.500"/><rect x="1" y="7" width="12" height="8" rx="1" fill="#555"/></svg></button>
  <label for="magn">Magnifier</label><span class="spin mag"><input id="magn" value="100%"><span><button aria-label="Up"></button><button aria-label="Down"></button></span></span>
  <label class="rot" for="rota">Rotation</label><span class="spin mag"><input id="rota" value="0.0 °"><span><button aria-label="Up"></button><button aria-label="Down"></button></span></span>
  <input type="checkbox" id="render" checked><label for="render">Render</label>
  <button class="epsg"><svg viewBox="0 0 24 24"><use href="#meridian"/></svg>EPSG:32616</button>
  <button class="ic msg" aria-label="Messages"><svg viewBox="0 0 18 16"><path d="M9 1q8 0 8 6 0 4-3 5v3l-4-2.500Q1 13 1 7q0-6 8-6z" fill="#666"/><path d="M4 7h2M8 7h2M12 7h2" stroke="#fff" stroke-width="2"/></svg></button>
</footer>

<footer class="taskbar">
  <button class="start" aria-label="Start"><svg viewBox="0 0 16 16"><path d="M0 2.500l7-1V7.500H0zM8 1.300L16 0v7.500H8zM0 8.500h7v6l-7-1zM8 8.500h8V16l-8-1.300z"/></svg></button>
  <div class="search"><svg viewBox="0 0 18 18"><circle cx="11" cy="7" r="5.500" fill="none" stroke="#222" stroke-width="1.300"/><path d="M7 11l-6 6" stroke="#222" stroke-width="1.300"/></svg><input aria-label="Pesquisar" placeholder="Pesquisar">
    <svg class="medals" viewBox="0 0 74 38"><circle cx="13" cy="18" r="12" fill="#b3b9c4"/><g fill="#8d95a3"><circle cx="8" cy="12" r="1.200"/><circle cx="14" cy="10" r="1.200"/><circle cx="7" cy="18" r="1.200"/><circle cx="13" cy="17" r="1.200"/><circle cx="19" cy="15" r="1.200"/><circle cx="10" cy="24" r="1.200"/><circle cx="17" cy="23" r="1.200"/></g><path d="M27 0h9l9 18-6 3zM58 0H48L38 18l4 3z" fill="#2c62b8"/><path d="M30 0h4l9 18-3 2zM55 0h-4L40 19l3 1z" fill="#fff"/><path d="M32 0h3l8 17-2 2z" fill="#d63a35"/><circle cx="36" cy="27" r="9.500" fill="#d9a61e" stroke="#a87c10"/><circle cx="36" cy="27" r="6.500" fill="#efc544"/><path d="M57 7q8-2 13 1l-4 5-4 3-7 17q-3 3-5 1l7-17z" fill="#e0672f" stroke="#b44718"/></svg>
  </div>
  <nav class="apps">
    <button class="run" aria-label="Vivaldi"><svg viewBox="0 0 24 24"><rect width="24" height="24" rx="5" fill="#ef3939"/><circle cx="12" cy="12" r="9" fill="#fff"/><path d="M8 9l4 7 4-7" fill="none" stroke="#ef3939" stroke-width="3" stroke-linecap="round" stroke-linejoin="round"/></svg></button>
    <button class="run many" aria-label="Explorer"><svg viewBox="0 0 24 24"><path d="M1 3h9l2 3h11v15H1z" fill="#fcd462"/><path d="M1 3h9v3H1z" fill="#e0a32c"/><path d="M5 22v-7q0-2 2-2h10q2 0 2 2v7h-4v-4H9v4z" fill="#2f8fdc"/></svg></button>
    <button aria-label="Command prompt"><svg viewBox="0 0 24 24"><path d="M1 2h23v19H1z" fill="#0c0c0c" stroke="#999"/><path d="M1 2h23v3H1z" fill="#ccc"/><path d="M4 9h2M4 11h2M8 9v2M11 8l2 3M15 11h6" stroke="#ddd"/></svg></button>
    <button class="run" aria-label="Notepad"><svg viewBox="0 0 24 24"><path d="M9 2l14 2-6 18-14-3z" fill="#8cc8e4" stroke="#5a9ab8"/><path d="M17 22l6-18 1 3-5 16z" fill="#4d7a94"/><path d="M9 2l14 2" stroke="#555" stroke-width="2" stroke-dasharray="1 1"/></svg></button>
    <button class="run" aria-label="Paint"><svg viewBox="0 0 24 24"><path d="M11 5q11 0 10 8-1 3-5 2-3 0-2 4 0 5-7 3-6-3-6-9 1-7 10-8z" fill="#cfe2f2" stroke="#7da3c2"/><circle cx="7" cy="10" r="2" fill="#e84b3c"/><circle cx="13" cy="8" r="2" fill="#6bb840"/><circle cx="5" cy="15" r="2" fill="#f3b62b"/><circle cx="9" cy="19" r="2" fill="#3a79d8"/><path d="M21 7L11 22" stroke="#d88a35" stroke-width="2.500"/><path d="M19 9l1-7q4-3 4 2l-2 6z" fill="#b98045"/></svg></button>
    <button class="run" aria-label="Excel"><svg viewBox="0 0 24 24"><path d="M7 1h17v22H7z" fill="#21a366"/><path d="M15 1h9v7h-9z" fill="#33c481"/><path d="M7 12h17v11H7z" fill="#185c37"/><path d="M15 12h9v5h-9z" fill="#107c41"/><rect y="6" width="13" height="13" fill="#107c41"/><path d="M3.500 8.500l6 8M9.500 8.500l-6 8" stroke="#fff" stroke-width="2"/></svg></button>
    <button class="run active" aria-label="QGIS"><svg viewBox="0 0 24 24"><use href="#qlogo"/></svg></button>
  </nav>
  <button class="weather"><svg viewBox="0 0 26 26"><circle cx="13" cy="14" r="9.500" fill="#f59a23"/><path d="M3 10q-3-6 3-6 4-5 8 0 4 0 3 6z" fill="#a9c8f0"/><path d="M13 23q-2-5 3-5 4-4 6 1 5 1 2 4z" fill="#bcd4f4"/><circle cx="18" cy="7" r="6.500" fill="#c4281c"/><text x="15" y="11" class="ico-n">1</text></svg><span>15°C</span><span>Parc ensolarado</span></button>
  <button class="chev" aria-label="Show hidden icons"><svg viewBox="0 0 12 8"><path d="M1 7l5-5 5 5" fill="none" stroke="#111" stroke-width="1.300"/></svg></button>
  <button class="lang">ENG</button>
  <button class="clock"><time>9:48 AM<br>6/12/2025</time></button>
  <button class="notif" aria-label="Notifications"><svg viewBox="0 0 18 18"><path d="M1 1h16v12h-6l-4 4v-4H1z"/><path d="M4 4.500h10M4 7.500h10M4 10.500h5" stroke="#fff"/><circle cx="14" cy="13" r="3.500" stroke="#eee"/></svg></button>
</footer>
</body>
</html>
```
FILE: styles.css
```css
* { box-sizing: border-box; }
body {
  margin: 0;
  height: 100vh;
  display: flex;
  flex-direction: column;
  overflow: hidden;
  background: #efefef;
  color: #000;
  font: 11px/18px "Open Sans", "Noto Sans", sans-serif;
}
button, input, select { font: inherit; color: inherit; }
button { background: none; border: 0; padding: 0; }
h1, h2 { margin: 0; font-size: 11px; font-weight: 400; }
ul { list-style: none; margin: 0; padding: 0; }
svg { display: block; }
.defs { position: absolute; width: 0; height: 0; }

.ico-a { font: 600 12px/1 "Open Sans", sans-serif; fill: #555; }
.ico-s { font: 700 7px "Open Sans", sans-serif; }
.ico-i { font: italic 700 13px "Liberation Serif", serif; fill: #fff; }
.ico-i.big { font-size: 17px; }
.ico-t { font: 700 8px "DejaVu Sans", sans-serif; fill: #333; }
.ico-q { font: 700 14px "Liberation Serif", serif; fill: #fff; }
.ico-xy { font: 700 10px "Open Sans", sans-serif; fill: #777; }
.ico-e { font: 700 21px "Liberation Serif", serif; fill: #6d4a78; }
.ico-m { font: 700 11px "Open Sans", sans-serif; fill: #333; }
.ico-n { font: 700 10px "Open Sans", sans-serif; fill: #fff; }
.blue { --line: #3f86dc; }
.red { --line: #f22; }
.red .ico-t { fill: #d22; }

/* title and menu */
.titlebar { display: flex; align-items: center; height: 23px; flex: none; background: #fff; position: relative; }
.titlebar .logo { width: 14px; height: 14px; margin-left: -1px; }
.titlebar h1 { margin-left: 6px; }
.progress { position: absolute; top: 0; left: 558px; width: 240px; height: 1px; background: #e4e4e4; }
.progress span { display: block; width: 48px; height: 1px; background: #0078d7; }
.winbtns { margin: 0 3px 2px auto; display: flex; }
.winbtns button { width: 46px; height: 20px; display: grid; place-items: center; }
.winbtns svg { width: 12px; height: 12px; }
.menubar { display: flex; gap: 15px; height: 20px; flex: none; padding-left: 5px; border-bottom: 1px solid #d0d0d0; align-items: center; }
.menubar button { line-height: 18px; }
u { text-underline-offset: 2px; }

/* toolbars */
.toolbar { display: flex; align-items: center; height: 39px; flex: none; border-bottom: 1px solid #b4b4b4; background: linear-gradient(#fafafa, #ededed); }
.toolbar label, .trow, .layer, .stylebody, .status { font-family: Roboto, "Open Sans", sans-serif; }
.handle { width: 16px; height: 24px; flex: none; background: radial-gradient(circle, #c4c4c4 1px, transparent 1px) 6px 0 / 3px 3px; clip-path: inset(0 5px 0 5px); }
.handle:first-child { width: 9px; clip-path: inset(0 4px 0 0); background-position: 0 0; }
.sep { width: 1px; height: 22px; background: #cfcfcf; margin: 0 4px 0 2px; flex: none; }
.sep.tight { margin-right: 2px; }
.tb { width: 30px; height: 30px; margin-right: 3px; flex: none; display: flex; align-items: center; justify-content: center; }
.tb svg { width: 24px; height: 24px; flex: none; }
.tb.on { background: #dcdcdc; border: 1px solid #b0b0b0; border-radius: 2px; }
.tb.off svg { opacity: .36; filter: grayscale(.7); }
.tb.drop { width: 42px; justify-content: flex-start; gap: 5px; padding-left: 3px; }
.drop::after, .tri { content: ""; flex: none; border: 4px solid transparent; border-top-color: #555; border-bottom: 0; }
.drop.off::after { border-top-color: #aaa; }

/* controls */
.push { border: 1px solid #a9a9a9; border-radius: 2px; background: linear-gradient(#fefefe, #efefef); display: flex; align-items: center; justify-content: center; height: 22px; flex: none; }
.push:disabled { color: #888; border-color: #c0c0c0; }
.wide80 { width: 80px; }
.refresh { width: 28px; height: 24px; }
.refresh svg { width: 17px; height: 17px; }
.combo { display: flex; align-items: center; height: 22px; border: 1px solid #a9a9a9; border-radius: 2px; background: linear-gradient(#fefefe, #efefef); padding: 0 6px 0 4px; }
.combo select { appearance: none; border: 0; background: none; padding: 0; flex: 1; width: 100%; min-width: 0; outline: 0; }
.combo svg { width: 16px; height: 16px; margin: 0 2px; flex: none; }
.combo::after { content: ""; border: 4px solid transparent; border-top-color: #555; border-bottom: 0; }
.grow { flex: 1; }
.zoomlevel { width: 72px; margin-left: 2px; }
.zoomlevel + .handle { width: 18px; }
.field, .spin, .editcombo { border: 1px solid #a9a9a9; border-radius: 2px; background: #fff; height: 22px; padding: 0 3px; }
.spin, .editcombo { display: flex; align-items: stretch; padding: 0; flex: none; }
.spin input, .editcombo input { border: 0; background: none; flex: 1; min-width: 0; width: 100%; padding: 0 4px; outline: 0; }
.spin > span { width: 15px; border-left: 1px solid #c4c4c4; display: flex; flex-direction: column; justify-content: center; align-items: center; gap: 2px; background: #f5f5f5; }
.spin > span button { border: 4px solid transparent; border-top-color: #555; border-bottom: 0; }
.spin > span button:first-child { border-top: 0; border-bottom: 4px solid #555; }
.editcombo button { width: 20px; border-left: 1px solid #c4c4c4; display: grid; place-items: center; background: #f7f7f7; }
input[type=checkbox] { appearance: none; width: 14px; height: 14px; margin: 0; border: 1px solid #b4b4b4; background: #fff; display: grid; place-items: center; flex: none; }
input[type=checkbox]:checked::after { content: ""; width: 4px; height: 8px; border: solid #000; border-width: 0 2px 2px 0; transform: rotate(38deg); margin-bottom: 2px; }
.push-right { margin-left: auto; }
.sym { width: 9px; height: 9px; border-radius: 50%; background: #b5474d; border: 1px solid #5e3a3c; }

/* docks */
.work { flex: 1; display: flex; min-height: 0; position: relative; }
.left { width: 180px; flex: none; display: flex; flex-direction: column; }
.dock { display: flex; flex-direction: column; }
.docktitle { display: flex; align-items: center; gap: 3px; height: 20px; padding-right: 2px; }
.docktitle h2 { flex: 1; }
.docktitle svg { width: 11px; height: 11px; }
.dockbar { display: flex; align-items: center; height: 30px; padding: 0 2px 2px; gap: 7px; }
.dockbar button { width: 18px; height: 22px; display: grid; place-items: center; flex: none; }
.dockbar svg { width: 16px; height: 16px; }
.treebox { display: grid; grid-template: 202px 14px / 1fr 14px; border: 1px solid #b4b4b4; border-left: 0; background: #fff; }
.tree { overflow: hidden; min-width: 0; }
.tree li { position: relative; display: flex; align-items: center; gap: 6px; height: 18px; padding-left: 15px; padding-top: 2px; white-space: nowrap; }
.tree .cut { height: 4px; padding-top: 0; }
.tree .cut svg { height: 4px; }
.tree svg { width: 16px; height: 16px; flex: none; }
.exp::before { content: ""; position: absolute; left: 2px; border: 4px solid transparent; border-left-color: #555; border-right: 0; }
.vbar, .hbar { display: flex; background: #e2e2e2; }
.vbar { flex-direction: column; border-left: 1px solid #b4b4b4; }
.hbar { border-top: 1px solid #b4b4b4; }
.ar { flex: none; width: 13px; height: 14px; display: grid; place-items: center; background: #f7f7f7; }
.ar::before { content: ""; border: 4px solid transparent; }
.up::before { border-bottom-color: #555; border-top: 0; }
.down::before { border-top-color: #555; border-bottom: 0; }
.lf::before { border-right-color: #555; border-left: 0; }
.rt::before { border-left-color: #555; border-right: 0; }
.hbar .ar { width: 9px; height: 13px; }
.hbar .rt { width: 14px; border-left: 1px solid #b4b4b4; }
.vbar .thumb { flex: 96; background: linear-gradient(90deg, #fff, #f2f2f2); border: solid #b4b4b4; border-width: 1px 0; }
.vbar .rest { flex: 79; }
.hbar .thumb { flex: 135; background: linear-gradient(#fff, #f0f0f0); border: solid #b4b4b4; border-width: 0 1px; }
.hbar .rest { flex: 8; }
.corner { border: solid #b4b4b4; border-width: 1px 0 0 1px; background: #efefef; }
.grip-h { height: 6px; flex: none; align-self: center; width: 18px; background: radial-gradient(circle, #bbb 1px, transparent 1px) 0 1px / 3px 3px repeat-x; }
.layers { flex: 1; }
.dockbar.lay { padding: 0 0 2px; gap: 5px; }
.lay button { width: 20px; }
.dockbar .on { width: 22px; height: 23px; background: #dcdcdc; border: 1px solid #b8b8b8; border-left: 0; }
.lay .wide { width: 32px; display: flex; align-items: center; gap: 5px; }
.lay .wide::after { content: ""; border: 4px solid transparent; border-top-color: #555; border-bottom: 0; }
.lay .more { width: 14px; font-size: 16px; color: #444; }
.layertree { flex: 1; background: #fff; border: 1px solid #b4b4b4; border-left: 0; }
.layertree li { display: flex; align-items: center; height: 18px; background: #efefef; padding-left: 19px; }
.layertree .sym { margin: 0 9px 0 10px; }
.layertree label { font-weight: 700; font-size: 12px; text-decoration: underline; text-underline-offset: 2px; }
.grip-v { width: 6px; flex: none; background: radial-gradient(circle, #bbb 1px, transparent 1px) 2px 0 / 3px 3px repeat-y; clip-path: inset(262px 0 260px 0); }
.grip-v.right { width: 9px; }

/* map and time manager */
.center { flex: 1; min-width: 0; display: flex; flex-direction: column; }
.map { flex: 1; border: 1px solid #b4b4b4; background: #fff; min-height: 0; position: relative; }
.map svg { position: absolute; inset: 0; }
.time { height: 128px; flex: none; padding: 0 8px 0 4px; }
.time .docktitle { padding: 0; margin-right: -6px; }
.trow { display: flex; align-items: center; gap: 6px; height: 32px; padding-left: 5px; white-space: nowrap; }
.controls { height: 44px; }
.power { width: 28px; height: 24px; background: #dcdcdc; }
.power svg { width: 18px; height: 18px; }
.arch { width: 28px; display: grid; place-items: center; }
.arch svg { width: 16px; height: 10px; }
.dt { width: 152px; }
.ts { width: 87px; }
.media { width: 28px; display: grid; place-items: center; flex: none; }
.media svg { width: 13px; height: 11px; }
.sliderrow { height: 20px; }
.playrow { height: 42px; }
.playrow .media svg { width: 15px; height: 17px; }
.playrow .end { margin-left: auto; margin-right: 34px; }
input[type=range] { appearance: none; flex: 1; margin: 0; background: none; height: 14px; }
input[type=range]::-webkit-slider-runnable-track { height: 5px; border: 1px solid #aaa; background: #d8d8d8; border-radius: 2px; }
input[type=range]::-webkit-slider-thumb { appearance: none; width: 14px; height: 13px; margin-top: -5px; border: 1px solid #999; border-radius: 3px; background: #fff; }

/* layer styling */
.styling { width: 400px; flex: none; display: flex; flex-direction: column; padding-right: 4px; }
.styling .docktitle { margin: 0 -3px 4px 1px; }
.layer { height: 23px; margin-bottom: 11px; }
.stylebody { flex: 1; display: grid; grid-template: 1fr auto / 38px 1fr; column-gap: 3px; padding-bottom: 3px; min-height: 0; }
.strip { grid-row: 1 / 3; background: #5d5d5d; display: flex; flex-direction: column; }
.strip button { height: 32px; display: grid; place-items: center; padding-right: 7px; }
.strip .on { height: 26px; background: #efefef; }
.strip svg { width: 22px; height: 22px; }
.scroll { display: flex; min-height: 0; }
.scroll .vbar { width: 14px; }
.scroll .rest.top { flex: 7; }
.scroll .thumb { flex: 350; }
.scroll .rest { flex: 66; }
.form { flex: 1; min-width: 0; display: flex; flex-direction: column; gap: 6px; padding-right: 1px; }
.graduated { height: 15px; border-top: 0; border-radius: 0 0 2px 2px; padding-bottom: 6px; }
.frow { display: flex; align-items: center; height: 22px; gap: 6px; white-space: nowrap; }
.frow > label, .frow > .lab { width: 70px; flex: none; }
.frow > label.auto { width: auto; }
.value { height: 24px; }
.value .editcombo { flex: 1; height: 24px; }
.editcombo b { padding-left: 3px; line-height: 20px; color: #555; }
.eps { width: 23px; height: 24px; font: 400 22px/16px "Liberation Serif", serif; color: #6d4a78; }
.symbol { height: 81px; gap: 0; }
.frow.symbol > .lab { width: 76px; }
.symbtn { width: 110px; height: 81px; }
.symdrop { width: 12px; height: 81px; margin-left: -1px; }
.frow .field { width: 124px; }
.prec { width: 84px; }
.frow > input[type=checkbox] { margin-left: 1px; }
.ramp { flex: 1; padding: 2px 4px; }
.ramp i { width: 100%; height: 16px; background: linear-gradient(90deg, #fff, #f00); }
.rampdrop { width: 12px; margin-left: -5px; }
.tabs { display: flex; align-items: flex-end; height: 24px; border-bottom: 1px solid #b4b4b4; }
.tabs button { height: 21px; padding: 0 10px; background: #e8e8e8; border: 1px solid #b4b4b4; border-bottom: 0; border-left: 0; border-radius: 2px 2px 0 0; }
.tabs button:first-child { height: 24px; margin-bottom: -1px; padding: 0 11px; background: #fbfbfb; border-left: 1px solid #b4b4b4; }
.classes { flex: 1; margin-top: 4px; background: #fff; border: 1px solid #b4b4b4; min-height: 60px; }
.classes table { width: 100%; border-collapse: collapse; table-layout: fixed; }
.classes th { text-align: left; font-weight: 400; padding: 0 2px; height: 18px; border-right: 1px solid #c8c8c8; border-bottom: 1px solid #b4b4b4; background: linear-gradient(#fefefe, #efefef); }
.classes th:first-child { width: 66px; }
.classes th:nth-child(2) { width: 60px; }
.classes th:last-child { border-right: 0; }
.classes .tri { float: right; margin-top: 7px; }
.mode { height: 25px; margin-bottom: 1px; }
.modec { width: 158px; height: 24px; }
.ncls { width: 67px; }
.actions { display: flex; align-items: center; gap: 6px; padding-top: 6px; }
.sq { width: 24px; height: 23px; }
.sq svg { width: 14px; height: 14px; }
.actions input[type=checkbox] { margin-left: auto; }
.actions label { margin: 0 6px 0 -2px; }

.note { position: absolute; pointer-events: none; }
.arrow-a { width: 68px; height: 42px; right: 354px; top: 44px; }
.arrow-b { width: 88px; height: 62px; right: 75px; top: 63px; }
.dot { width: 6px; height: 6px; right: 398px; top: 191px; border-radius: 50%; background: #000; }

/* status bar */
.status { display: flex; align-items: center; gap: 4px; height: 28px; flex: none; padding-right: 3px; white-space: nowrap; }
.locate { width: 199px; height: 22px; display: flex; align-items: center; background: #fff; border: 1px solid #a9a9a9; border-radius: 2px; padding-left: 7px; }
.locate svg { width: 13px; height: 13px; }
.locate input { border: 0; background: none; flex: 1; min-width: 0; padding: 0 6px; outline: 0; }
::placeholder { color: #777; opacity: 1; }
.coord { width: 99px; padding: 0 5px; }
.ic { width: 25px; display: grid; place-items: center; }
.ic svg { width: 16px; height: 16px; }
.scale { width: 81px; }
.lock svg { width: 14px; }
.mag { width: 84px; }
.rot { margin: 0 4px; }
.status input[type=checkbox] { margin-left: 3px; }
.epsg { display: flex; align-items: center; margin: 0 12px; }
.epsg svg { width: 15px; height: 15px; }

/* taskbar */
.taskbar { display: flex; height: 40px; flex: none; background: #eee; font-size: 13px; align-items: center; padding-right: 4px; }
.taskbar button { height: 40px; display: grid; place-items: center; flex: none; }
.start { width: 38px; }
.start svg { width: 16px; height: 16px; }
.search { width: 288px; height: 40px; margin: 0 3px 0 5px; display: flex; align-items: center; background: #fff; border: 1px solid #b8b8b8; padding: 0 4px 0 11px; }
.search > svg { width: 17px; height: 17px; }
.search input { border: 0; flex: 1; min-width: 0; padding: 0 11px; background: none; outline: 0; }
.search ::placeholder { color: #333; }
.search .medals { width: 74px; height: 38px; }
.apps { display: flex; gap: 1px; }
.apps button { width: 48px; position: relative; }
.apps svg { width: 24px; height: 24px; }
.run::after { content: ""; position: absolute; left: 4px; right: 4px; bottom: 0; height: 3px; background: #0078d7; }
.run.many::after { background: linear-gradient(90deg, #0078d7 80%, #5aa9e6 80%); }
.run.active { background: #fbfbfb; }
.run.active::after { left: 0; right: 0; }
.taskbar .weather { display: flex; align-items: center; gap: 9px; margin: 0 8px 0 auto; }
.weather svg { width: 25px; height: 25px; }
.chev { width: 36px; }
.chev svg { width: 12px; height: 8px; }
.lang { font-size: 12px; }
.clock { width: 76px; font-size: 11px; line-height: 18px; }
.notif { width: 34px; margin-right: 12px; }
.notif svg { width: 18px; height: 18px; }
```
